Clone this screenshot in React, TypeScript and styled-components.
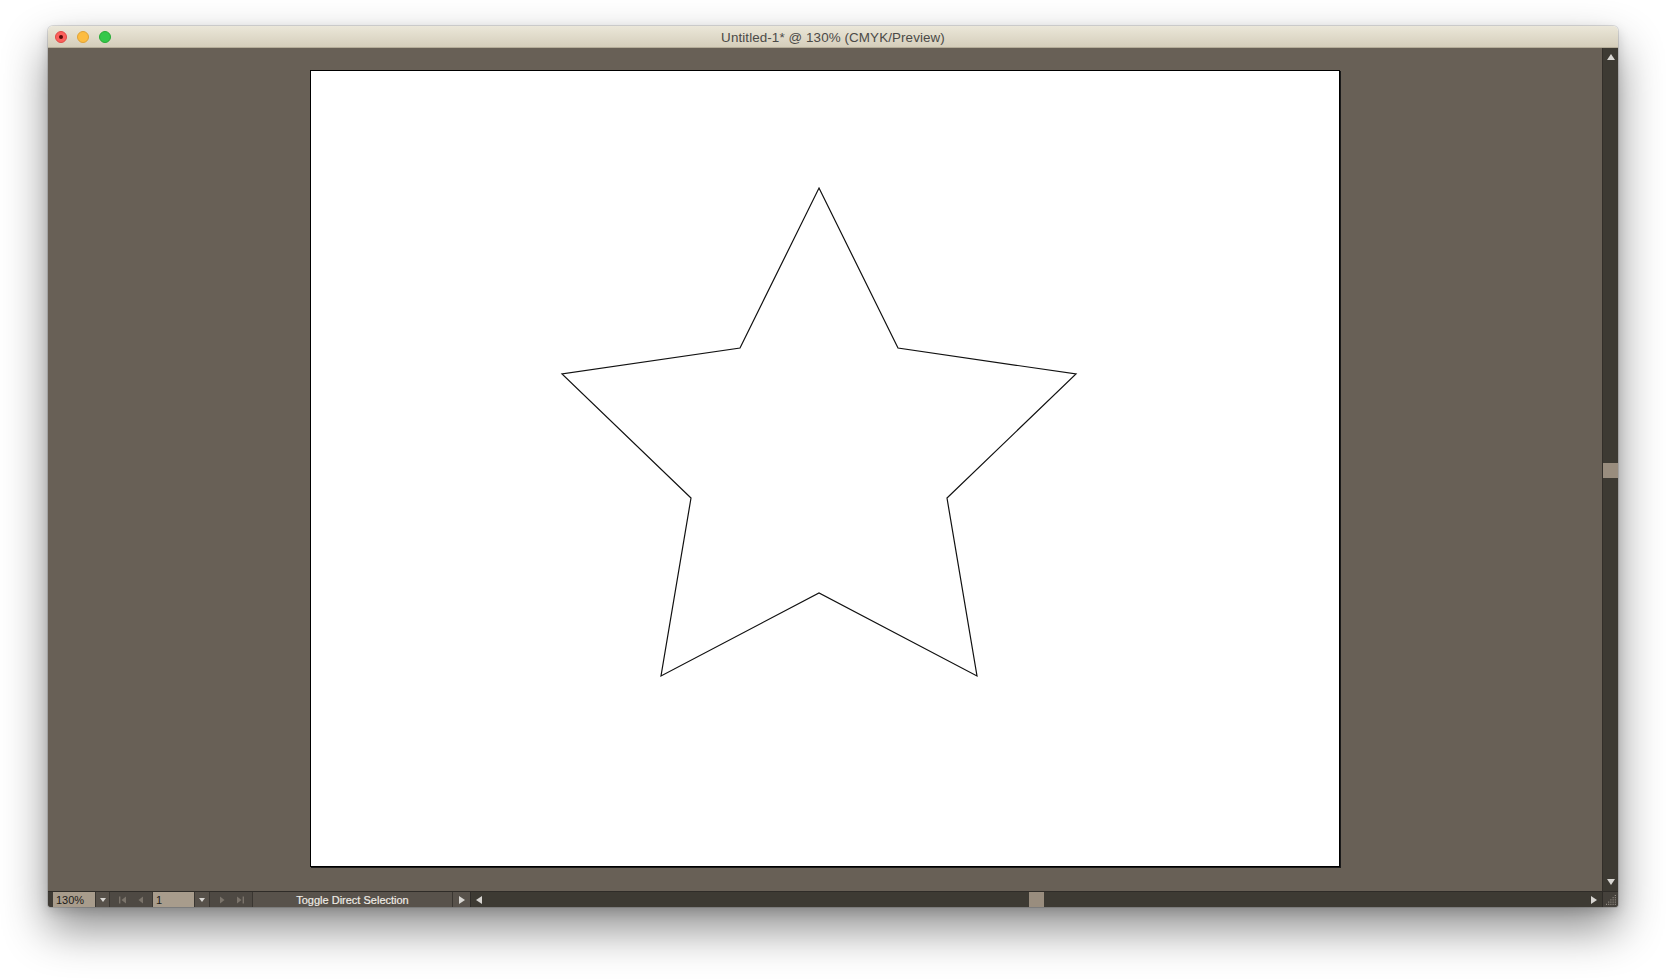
import React from 'react';
import styled, { createGlobalStyle } from 'styled-components';

const GlobalStyle = createGlobalStyle`
  html, body {
    margin: 0;
    padding: 0;
    background: #ffffff;
    overflow: hidden;
  }
  * {
    box-sizing: border-box;
  }
`;

// star vertices in artboard coordinates (artboard starts at 310,70)
const STAR = [
  [818, 187], [897, 347], [1075, 373], [946, 497], [976, 675],
  [818, 592], [660, 675], [690, 497], [561, 373], [739, 347],
]
  .map(([x, y]) => `${x - 310},${y - 70}`)
  .join(' ');

type Dir = 'up' | 'down' | 'left' | 'right';

const App = () => {
  return (
    <>
      <GlobalStyle />
      <Desk>
        <Window>
          <TitleBar>
            <Lights>
              <Light fill="#fc605c" edge="#de4a46">
                <Dot />
              </Light>
              <Light fill="#fdbc40" edge="#dea236" />
              <Light fill="#34c84a" edge="#27aa35" />
            </Lights>
            <Title>Untitled-1* @ 130% (CMYK/Preview)</Title>
            <span />
          </TitleBar>

          <Main>
            <Canvas>
              <Artboard>
                <svg width="100%" height="100%" viewBox="0 0 1028 795">
                  <polygon points={STAR} fill="none" stroke="#111" strokeWidth="1.2" />
                </svg>
              </Artboard>
            </Canvas>
            <VScroll>
              <VBtn top>
                <Arrow dir="up" />
              </VBtn>
              <VTrack>
                <VThumb offset={397} />
              </VTrack>
              <VBtn>
                <Arrow dir="down" />
              </VBtn>
            </VScroll>
          </Main>

          <StatusBar>
            <LeftCap />
            <Field width={43}>130%</Field>
            <DropBtn width={14}>
              <Arrow dir="down" small />
            </DropBtn>
            <NavGroup>
              <NavIcon first />
              <NavIcon />
            </NavGroup>
            <Field width={42}>1</Field>
            <DropBtn width={15}>
              <Arrow dir="down" small />
            </DropBtn>
            <NavGroup>
              <NavIcon next />
              <NavIcon next first />
            </NavGroup>
            <StatusText>Toggle Direct Selection</StatusText>
            <MenuBtn>
              <Arrow dir="right" />
            </MenuBtn>
            <HScroll>
              <HBtn>
                <Arrow dir="left" />
              </HBtn>
              <HTrack>
                <HThumb offset={542} />
              </HTrack>
              <HBtn>
                <Arrow dir="right" />
              </HBtn>
            </HScroll>
            <Corner>
              <svg width="12" height="12" viewBox="0 0 12 12">
                {[0, 1, 2, 3, 4].map((r) =>
                  [0, 1, 2, 3, 4].filter((c) => c + r >= 4).map((c) => (
                    <rect key={`${r}-${c}`} x={1 + c * 2.2} y={1 + r * 2.2} width="1" height="1" fill="#a8a29a" />
                  ))
                )}
              </svg>
            </Corner>
          </StatusBar>
        </Window>
      </Desk>
    </>
  );
};

export default App;

const NavIcon = ({ first, next }: { first?: boolean; next?: boolean }) => (
  <svg width="9" height="8" viewBox="0 0 9 8" style={{ transform: next ? 'scaleX(-1)' : undefined }}>
    {first && <rect x="1" y="0.5" width="1.4" height="7" fill="#7b746b" />}
    <polygon points={first ? '8,0.5 3.5,4 8,7.5' : '7,0.5 2.5,4 7,7.5'} fill="#7b746b" />
  </svg>
);

const Desk = styled.div`
  width: 1666px;
  height: 980px;
  padding: 26px 0 0 48px;
`;

const Window = styled.div`
  width: 1570px;
  height: 881px;
  display: flex;
  flex-direction: column;
  border-radius: 5px 5px 3px 3px;
  overflow: hidden;
  box-shadow: 0 0 0 1px rgba(0, 0, 0, 0.12), 0 22px 45px rgba(0, 0, 0, 0.45),
    0 4px 12px rgba(0, 0, 0, 0.15);
`;

const TitleBar = styled.div`
  height: 22px;
  flex-shrink: 0;
  display: grid;
  grid-template-columns: 1fr auto 1fr;
  align-items: center;
  background: linear-gradient(#ebe7d9, #d5cebb);
  border-bottom: 1px solid #b5ad99;
`;

const Lights = styled.div`
  display: flex;
  align-items: center;
  gap: 10px;
  padding-left: 7px;
`;

const Light = styled.div<{ fill: string; edge: string }>`
  width: 12px;
  height: 12px;
  border-radius: 50%;
  background: ${({ fill }) => fill};
  border: 0.5px solid ${({ edge }) => edge};
  display: flex;
  align-items: center;
  justify-content: center;
`;

const Dot = styled.div`
  width: 4px;
  height: 4px;
  border-radius: 50%;
  background: #5a0c0a;
`;

const Title = styled.div`
  font-family: 'Liberation Sans', Arial, sans-serif;
  font-size: 13.4px;
  color: #4b4a47;
  letter-spacing: 0.1px;
  padding-top: 1px;
`;

const Main = styled.div`
  flex: 1;
  display: flex;
  min-height: 0;
`;

const Canvas = styled.div`
  flex: 1;
  background: #686056;
  padding: 22px 0 0 262px;
`;

const Artboard = styled.div`
  width: 1030px;
  height: 797px;
  background: #ffffff;
  border: 1px solid #000;
  box-shadow: 1px 1px 0 #1a1a1a;
`;

const VScroll = styled.div`
  width: 16px;
  display: flex;
  flex-direction: column;
  background: #3d3a33;
  border-left: 1px solid #332f2a;
`;

const VBtn = styled.div<{ top?: boolean }>`
  height: ${({ top }) => (top ? '18px' : '16px')};
  display: flex;
  justify-content: center;
  align-items: ${({ top }) => (top ? 'flex-start' : 'flex-end')};
  padding: ${({ top }) => (top ? '6px 0 0' : '0 0 6px')};
`;

const VTrack = styled.div`
  flex: 1;
`;

const VThumb = styled.div<{ offset: number }>`
  margin-top: ${({ offset }) => offset}px;
  height: 15px;
  background: #998d7e;
`;

const Arrow = styled.div<{ dir: Dir; small?: boolean }>`
  width: 0;
  height: 0;
  ${({ dir, small }) => {
    const a = small ? 3.5 : 4.5;
    const b = small ? 4 : 6;
    const c = '#d8d6d2';
    if (dir === 'up') return `border-left: ${a}px solid transparent; border-right: ${a}px solid transparent; border-bottom: ${b}px solid ${c};`;
    if (dir === 'down') return `border-left: ${a}px solid transparent; border-right: ${a}px solid transparent; border-top: ${b}px solid ${c};`;
    if (dir === 'left') return `border-top: ${a}px solid transparent; border-bottom: ${a}px solid transparent; border-right: ${b}px solid ${c};`;
    return `border-top: ${a}px solid transparent; border-bottom: ${a}px solid transparent; border-left: ${b}px solid ${c};`;
  }}
`;

const StatusBar = styled.div`
  height: 16px;
  flex-shrink: 0;
  display: flex;
  background: #4e4943;
  border-top: 1px solid #2f2c28;
  font-family: 'Liberation Sans', Arial, sans-serif;
  font-size: 11px;
`;

const LeftCap = styled.div`
  width: 5px;
  background: #3f3b35;
`;

const Field = styled.div<{ width: number }>`
  width: ${({ width }) => width}px;
  background: #a89c8c;
  color: #1c1a17;
  padding-left: 3px;
  line-height: 16px;
  border-right: 1px solid #3a3631;
`;

const DropBtn = styled.div<{ width: number }>`
  width: ${({ width }) => width}px;
  display: flex;
  align-items: center;
  justify-content: center;
  background: #57514a;
  border-right: 1px solid #3a3631;
`;

const NavGroup = styled.div`
  width: 43px;
  display: flex;
  align-items: center;
  justify-content: center;
  gap: 9px;
  background: #4e4943;
  border-right: 1px solid #3a3631;
`;

const StatusText = styled.div`
  width: 200px;
  text-align: center;
  color: #efece6;
  line-height: 16px;
  background: #58524b;
  border-right: 1px solid #3a3631;
  -webkit-text-stroke: 0.2px #efece6;
`;

const MenuBtn = styled.div`
  width: 18px;
  display: flex;
  align-items: center;
  justify-content: center;
  background: #58524b;
  border-right: 1px solid #2f2c28;
`;

const HScroll = styled.div`
  flex: 1;
  display: flex;
  background: #3d3a33;
`;

const HBtn = styled.div`
  width: 16px;
  display: flex;
  align-items: center;
  justify-content: center;
`;

const HTrack = styled.div`
  flex: 1;
`;

const HThumb = styled.div<{ offset: number }>`
  margin-left: ${({ offset }) => offset}px;
  width: 15px;
  height: 100%;
  background: #998d7e;
`;

const Corner = styled.div`
  width: 16px;
  display: flex;
  align-items: center;
  justify-content: center;
  background: #45413b;
  border-left: 1px solid #2f2c28;
`;
